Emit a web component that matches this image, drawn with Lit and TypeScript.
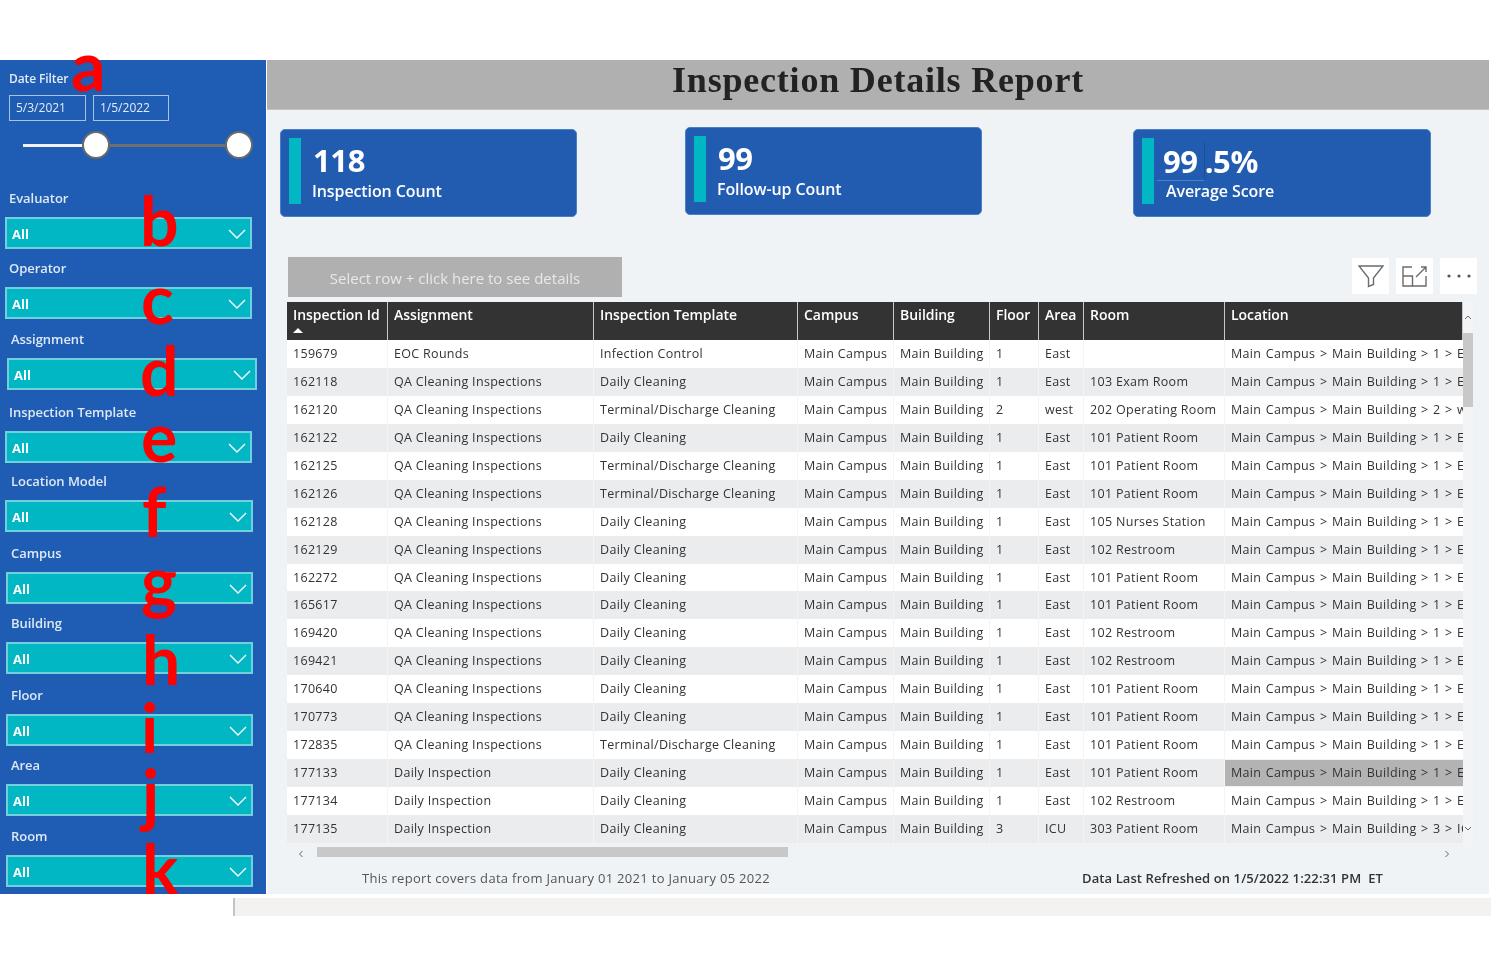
import { LitElement, html, css, svg } from "lit";
import { customElement } from "lit/decorators.js";

const SANS = css`"Open Sans", "Noto Sans", sans-serif`;

const slicers = [
  { label: "Evaluator", mt: 0, lx: 9, bx: 5, w: 247 },
  { label: "Operator", mt: 10, lx: 9, bx: 5, w: 247 },
  { label: "Assignment", mt: 11, lx: 11, bx: 7, w: 250 },
  { label: "Inspection Template", mt: 13, lx: 9, bx: 5, w: 247 },
  { label: "Location Model", mt: 9, lx: 11, bx: 5, w: 248 },
  { label: "Campus", mt: 12, lx: 11, bx: 6, w: 247 },
  { label: "Building", mt: 10, lx: 11, bx: 6, w: 247 },
  { label: "Floor", mt: 12, lx: 11, bx: 6, w: 247 },
  { label: "Area", mt: 10, lx: 11, bx: 6, w: 247 },
  { label: "Room", mt: 11, lx: 11, bx: 6, w: 247 },
];

const letters = [
  ["a", 71, 29], ["b", 140, 184], ["c", 141, 262], ["d", 140, 334], ["e", 141, 400], ["f", 142, 475],
  ["g", 141, 544], ["h", 142, 623], ["i", 141, 691], ["j", 142, 757], ["k", 142, 832],
] as const;

const D = "Daily Cleaning";
const T = "Terminal/Discharge Cleaning";
const Q = "QA Cleaning Inspections";
const I = "Daily Inspection";
const P1 = "101 Patient Room";
const R2 = "102 Restroom";
const rows = [
  ["159679", "EOC Rounds", "Infection Control", "1", "East", ""],
  ["162118", Q, D, "1", "East", "103 Exam Room"],
  ["162120", Q, T, "2", "west", "202 Operating Room"],
  ["162122", Q, D, "1", "East", P1],
  ["162125", Q, T, "1", "East", P1],
  ["162126", Q, T, "1", "East", P1],
  ["162128", Q, D, "1", "East", "105 Nurses Station"],
  ["162129", Q, D, "1", "East", R2],
  ["162272", Q, D, "1", "East", P1],
  ["165617", Q, D, "1", "East", P1],
  ["169420", Q, D, "1", "East", R2],
  ["169421", Q, D, "1", "East", R2],
  ["170640", Q, D, "1", "East", P1],
  ["170773", Q, D, "1", "East", P1],
  ["172835", Q, T, "1", "East", P1],
  ["177133", I, D, "1", "East", P1],
  ["177134", I, D, "1", "East", R2],
  ["177135", I, D, "3", "ICU", "303 Patient Room"],
];
const heads = ["Inspection Id", "Assignment", "Inspection Template", "Campus", "Building", "Floor", "Area", "Room", "Location"];

const chevron = svg`<svg class="chev" width="18" height="10" viewBox="0 0 18 10"><path d="M1 1l8 8 8-8" fill="none" stroke="#fff" stroke-width="1.4"/></svg>`;
const small = (d: string) => svg`<svg width="8" height="8" viewBox="0 0 8 8"><path d="${d}" fill="none" stroke="#666" stroke-width="1"/></svg>`;

@customElement("app-root")
export class AppRoot extends LitElement {
  static styles = css`
    :host { display: block; position: relative; width: 1491px; height: 961px; background: #fff; overflow: hidden; padding-top: 60px; box-sizing: border-box; font-family: ${SANS}; }
    .main { display: flex; height: 834px; filter: blur(0.3px); }
    .side { width: 266px; flex: none; background: #1f5db5; color: #e4ecf7; margin-right: 1px; display: flex; flex-direction: column; }
    .date-label { font-size: 12px; font-weight: 600; margin: 10px 0 0 9px; line-height: 17px; letter-spacing: -0.1px; }
    .dates { display: flex; gap: 7px; margin: 8px 0 0 9px; }
    .date { width: 77px; height: 26px; box-sizing: border-box; border: 1px solid #a9c1e4; font-size: 12px; line-height: 24px; padding-left: 6px; letter-spacing: 0; }
    .date + .date { width: 76px; }
    .slider { display: flex; align-items: center; margin: 10px 0 0 23px; width: 230px; height: 28px; }
    .seg1 { width: 72px; height: 3px; background: #f2f2f2; }
    .seg2 { flex: 1; height: 3px; background: #6f6f6f; }
    .knob { width: 28px; height: 28px; margin: 0 -13px 0 -13px; box-sizing: border-box; border-radius: 50%; background: #fff; border: 2px solid #6a6a6a; position: relative; flex: none; }
    .knob.end { margin: 0 0 0 -14px; }
    .slicers { display: flex; flex-direction: column; margin-top: 30px; }
    .sl-label { font-size: 13px; font-weight: 600; line-height: 18px; letter-spacing: -0.05px; color: #dfe8f5; }
    .sl-box { margin-top: 10px; height: 32px; box-sizing: border-box; border: 2px solid #72cfdc; background: #00b7c3; display: flex; align-items: center; justify-content: space-between; padding: 2px 4px 0 5px; font-size: 13px; font-weight: 700; color: #fff; }
    .right { flex: 0 0 1222px; background: #eff3f6; display: flex; flex-direction: column; }
    .title { height: 50px; flex: none; background: #b0b0b0; border-bottom: 1px solid #c4c4c4; box-sizing: border-box; text-align: center; font-family: "Liberation Serif", serif; font-weight: 700; font-size: 36px; line-height: 41px; color: #222; letter-spacing: 0.8px; }
    .kpis { display: flex; margin: 19px 0 0 13px; height: 88px; }
    .kpi { width: 297px; height: 88px; box-sizing: border-box; background: #215cb1; border-radius: 5px; border: 1px solid #4d7fc6; display: flex; padding: 8px 0 0 8px; color: #fff; flex: none; }
    .kpi.two { margin: -2px 0 0 108px; }
    .kpi.three { margin-left: 151px; width: 298px; }
    .kpi .bar { width: 12px; height: 66px; background: #00b7c3; flex: none; }
    .kpi .txt { display: flex; flex-direction: column; padding-left: 12px; }
    .kpi .num { font-size: 31px; font-weight: 700; line-height: 42px; margin-top: 1px; letter-spacing: -0.4px; }
    .kpi .lab { font-size: 16px; font-weight: 600; line-height: 20px; margin: 0 0 0 -1px; letter-spacing: -0.1px; }
    .kpi.three .txt { padding-left: 3px; }
    .n99 { display: inline-block; padding: 0 6px 0 6px; border-right: 1px solid #1c4f99; border-bottom: 1px solid #4d7fc6; height: 38px; line-height: 38px; vertical-align: top; }
    .kpi.three .num { height: 38px; margin-top: 4px; line-height: 38px; }
    .kpi.three .lab { padding-left: 9px; margin-left: 0; margin-top: 1px; }
    .tools { display: flex; margin: 40px 0 0 21px; height: 40px; width: 1189px; }
    .btn { width: 334px; height: 40px; background: #b0b0b0; color: #e8e8e8; font-size: 15px; line-height: 42px; text-align: center; letter-spacing: 0; }
    .icons { margin-left: auto; display: flex; gap: 7px; padding-top: 1px; }
    .ico { width: 37px; height: 36px; background: #fff; display: flex; align-items: center; justify-content: center; }
    .tablewrap { display: flex; margin: 5px 0 0 20px; height: 545px; }
    .table { width: 1176px; flex: none; overflow: hidden; }
    .grid { display: grid; grid-template-columns: 101px 206px 204px 96px 96px 49px 45px 141px 238px; }
    .hd { height: 38px; box-sizing: border-box; background: #333; color: #fff; font-size: 14px; font-weight: 600; padding: 3px 0 0 6px; border-right: 1px solid #c8c8c8; line-height: 20px; letter-spacing: -0.05px; white-space: nowrap; position: relative; }
    .hd:last-child { border-right: none; }
    .sort { display: block; width: 0; height: 0; border: 5px solid transparent; border-top: 0; border-bottom: 5px solid #fff; margin-top: 3px; }
    .c { height: 27.94px; box-sizing: border-box; font-size: 12.5px; line-height: 28px; padding-left: 6px; color: #333; white-space: nowrap; overflow: hidden; border-right: 1px solid #f4f4f4; background: #fff; letter-spacing: 0.31px; }
    .c.alt { background: #ebecee; }
    .c.loc { border-right: none; word-spacing: 1px; }
    .c.sel { background: #b3b3b3; margin: 1px 0; height: 25.94px; line-height: 26px; }
    .vbar { width: 10px; background: #f2f4f6; display: flex; flex-direction: column; align-items: center; padding-top: 11px; box-sizing: border-box; }
    .vthumb { width: 10px; height: 74px; background: #c8c8c8; margin-top: 12px; }
    .vbar .sp { flex: 1; }
    .vbar svg { flex: none; }
    .vbar svg:last-child { margin-bottom: 14px; }
    .hbar { display: flex; align-items: center; height: 10px; width: 1176px; margin-left: 20px; }
    .hbar svg { flex: none; }
    .hleft { margin-left: 10px; }
    .hthumb { width: 471px; height: 10px; background: #c8c8c8; margin-left: 12px; }
    .hright { margin-left: auto; margin-right: 12px; }
    .foot { display: flex; margin-top: 12px; padding-left: 95px; font-size: 13px; line-height: 18px; color: #555; letter-spacing: 0.3px; }
    .foot b { font-weight: 600; color: #333; margin-left: 312px; letter-spacing: 0.1px; white-space: pre; }
    .strip { margin: 4px 0 0 233px; height: 18px; background: #f3f2f1; border-left: 2px solid #c4c4c4; }
    .mark { position: absolute; color: #f00; font-family: Lato, sans-serif; font-weight: 700; font-size: 68px; line-height: 72px; }
  `;

  render() {
    return html`
      <div class="main">
        <aside class="side">
          <div class="date-label">Date Filter</div>
          <div class="dates"><div class="date">5/3/2021</div><div class="date">1/5/2022</div></div>
          <div class="slider"><span class="seg1"></span><span class="knob"></span><span class="seg2"></span><span class="knob end"></span></div>
          <div class="slicers">
            ${slicers.map((s) => html`
              <div style="margin-top:${s.mt}px">
                <div class="sl-label" style="margin-left:${s.lx}px">${s.label}</div>
                <div class="sl-box" style="margin-left:${s.bx}px;width:${s.w}px"><span>All</span>${chevron}</div>
              </div>`)}
          </div>
        </aside>
        <section class="right">
          <div class="title">Inspection Details Report</div>
          <div class="kpis">
            <div class="kpi"><div class="bar"></div><div class="txt"><div class="num">118</div><div class="lab">Inspection Count</div></div></div>
            <div class="kpi two"><div class="bar"></div><div class="txt"><div class="num">99</div><div class="lab">Follow-up Count</div></div></div>
            <div class="kpi three"><div class="bar"></div><div class="txt"><div class="num"><span class="n99">99</span>.5%</div><div class="lab">Average Score</div></div></div>
          </div>
          <div class="tools">
            <div class="btn">Select row + click here to see details</div>
            <div class="icons">
              <div class="ico"><svg width="26" height="23" viewBox="0 0 26 23"><path d="M1 1h24L15.5 13v6.5l-5 2V13z" fill="none" stroke="#6b6b6b" stroke-width="1.4"/></svg></div>
              <div class="ico"><svg width="25" height="21" viewBox="0 0 25 21"><path d="M10 1H1v19h23V10M1 10h9.5v10M14 11L24 1M19 1h5v5" fill="none" stroke="#6b6b6b" stroke-width="1.4"/></svg></div>
              <div class="ico"><svg width="24" height="4" viewBox="0 0 24 4"><circle cx="2" cy="2" r="1.6" fill="#555"/><circle cx="12" cy="2" r="1.6" fill="#555"/><circle cx="22" cy="2" r="1.6" fill="#555"/></svg></div>
            </div>
          </div>
          <div class="tablewrap">
            <div class="table">
              <div class="grid">
                ${heads.map((h, i) => html`<div class="hd">${h}${i === 0 ? html`<span class="sort"></span>` : ""}</div>`)}
                ${rows.map((r, i) => {
                  const alt = i % 2 === 1 ? "alt" : "";
                  const vals = [r[0], r[1], r[2], "Main Campus", "Main Building", r[3], r[4], r[5], `Main Campus > Main Building > ${r[3]} > ${r[4]} > ${r[5]}`];
                  return vals.map((v, j) => html`<div class="c ${alt} ${j === 8 ? "loc" : ""} ${i === 15 && j === 8 ? "sel" : ""}">${v}</div>`);
                })}
              </div>
            </div>
            <div class="vbar">${small("M1 6l3-3 3 3")}<div class="vthumb"></div><div class="sp"></div>${small("M1 2l3 3 3-3")}</div>
          </div>
          <div class="hbar">
            <span class="hleft">${small("M5.5 1l-3 3 3 3")}</span>
            <div class="hthumb"></div>
            <span class="hright">${small("M2.5 1l3 3-3 3")}</span>
          </div>
          <div class="foot"><span>This report covers data from January 01 2021 to January 05 2022</span><b>Data Last Refreshed on 1/5/2022 1:22:31 PM  ET</b></div>
        </section>
      </div>
      <div class="strip"></div>
      ${letters.map(([l, x, y]) => html`<span class="mark" style="left:${x}px;top:${y}px">${l}</span>`)}
    `;
  }
}
